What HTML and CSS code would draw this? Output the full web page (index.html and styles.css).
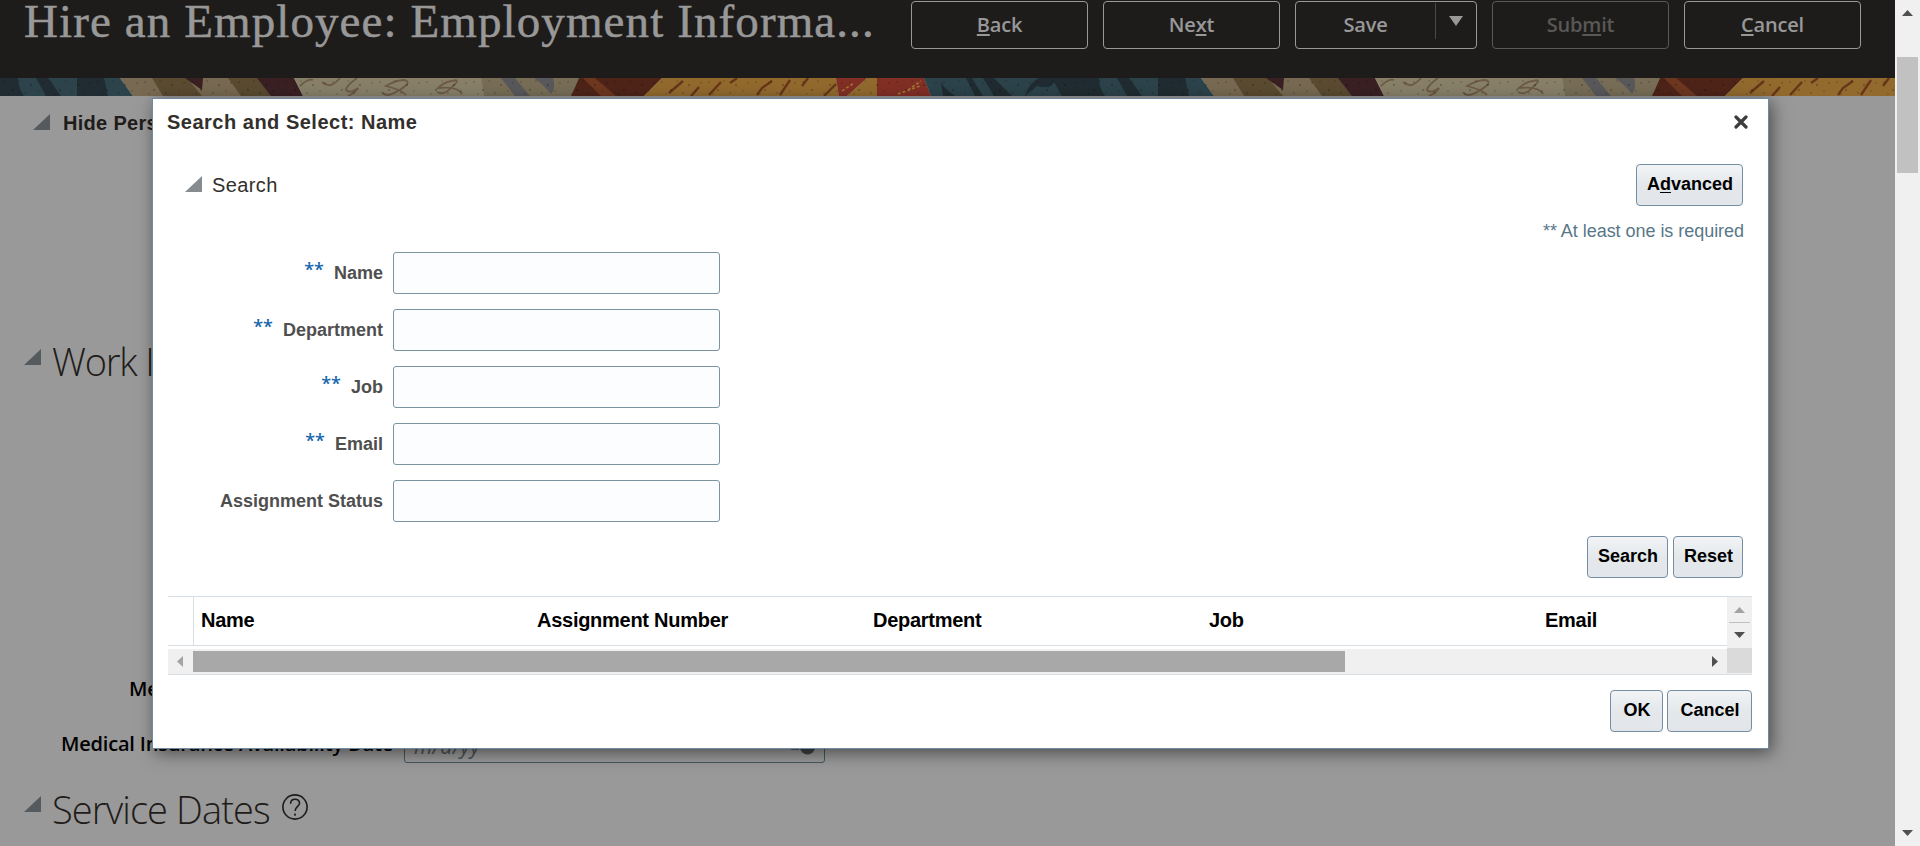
FILE: index.html
```html
<!DOCTYPE html>
<html lang="en">
<head>
<meta charset="utf-8">
<title>Hire an Employee</title>
<link rel="stylesheet" href="styles.css">
</head>
<body>
<div class="page">
  <div class="main">
    <header class="topbar">
      <h1 class="title">Hire an Employee: Employment Informa...</h1>
      <div class="actions">
        <button class="act"><span><u>B</u>ack</span></button>
        <button class="act"><span>Ne<u>x</u>t</span></button>
        <button class="act split"><span class="split-label">Save</span><span class="split-arrow"><svg width="14" height="10"><path d="M0 0H14L7 10Z" fill="#989898"/></svg></span></button>
        <button class="act disabled"><span>Sub<u>m</u>it</span></button>
        <button class="act"><span><u>C</u>ancel</span></button>
      </div>
    </header>
    <svg class="strip" width="1895" height="18" viewBox="0 0 1895 18">
      <defs>
        <pattern id="specks" width="47" height="18" patternUnits="userSpaceOnUse">
          <g fill="#000" fill-opacity=".3">
            <circle cx="4" cy="4" r=".8"/><circle cx="13" cy="12" r=".9"/><circle cx="19" cy="3" r=".7"/><circle cx="25" cy="15" r=".8"/><circle cx="31" cy="7" r=".9"/><circle cx="38" cy="13" r=".7"/><circle cx="43" cy="5" r=".8"/><circle cx="8" cy="16" r=".7"/>
          </g>
        </pattern>
        <g id="tile">
          <path fill="#2c434b" d="M-157 0H120L133 18H-150Z"/>
          <path fill="#202c31" d="M-140 4L-136 10L-126 18H-138ZM-115 0H-109L-98 18H-106ZM-98 0H-87L-69 18H-87ZM-56 18Q-52 5 -42 0H18Q18 10 24 18H-19L-27 4Q-30 12 -44 8ZM36 0H48L61 18H46ZM77 0H104L108 18H77Z"/>
          <path fill="#786a52" d="M120 0H257L271 18H133Z"/>
          <path fill="#5a4b31" d="M152 0H187L202 18H163ZM228 0H258L272 18H241Z"/>
          <path fill="#3a2023" d="M185 0H203L202 12ZM257 0H294L303 18H271Z"/>
          <path fill="#888069" d="M294 0H481L484 18H303Z"/>
          <g fill="none" stroke="#6d5b44" stroke-width="1.800">
            <path d="M300 8Q308 0 313 2M322 4Q330 12 340 0M357 0Q346 8 346 12Q350 16 358 10Q356 14 348 18M382 14Q386 20 396 14Q414 4 404 2Q396 2 386 8Q402 12 406 17M437 14Q444 18 452 9Q462 0 452 3Q444 4 438 10Q458 8 462 16"/>
          </g>
          <path fill="#786e57" d="M481 0H579L571 18H484Z"/>
          <path fill="#59585b" d="M501 0H515L530 18H515ZM534 0H553Q556 10 551 16Q545 8 534 0Z"/>
          <path fill="#4f2418" d="M579 0H662L644 18H571Z"/>
          <path fill="#6e3720" d="M583 0H595L616 18H601Z"/>
          <path fill="#926a2e" d="M662 0H836L839 18H644Z"/>
          <path fill="none" stroke="#683519" stroke-width="2.4" d="M669 15L683 3M691 18L699 9M709 17L721 4M737 0L730 5M757 17L762 10L772 3M780 17L790 2M808 0L802 8M824 18L836 6"/>
          <path fill="#822f25" d="M836 0H867L847 18H839ZM877 0H924L931 18H877Z"/>
          <path fill="#926a2e" d="M867 0H877V18H847Z"/>
          <path fill="none" stroke="#a07a36" stroke-width="1.5" stroke-dasharray="3 2" d="M842 13L854 5M898 16L920 8M908 12L921 3"/>
        </g>
      </defs>
      <use href="#tile"/><use href="#tile" x="1081"/>
      <rect width="1895" height="18" fill="url(#specks)"/>
    </svg>
    <div class="content">
      <div class="row personal"><i class="tri"></i><b>Hide Pers</b></div>
      <div class="row work"><i class="tri"></i><h2>Work I</h2></div>
      <div class="med-grid">
        <label>Me</label><span></span>
        <label>Medical Insurance Availability Date</label>
        <div class="date"><span>m/d/yy</span><svg width="26" height="22"><path d="M10 1H2V14H9M2 10H9" fill="none" stroke="#3e4a50" stroke-width="1.5"/><circle cx="17.500" cy="12" r="7.500" fill="#3e4245"/></svg></div>
      </div>
      <div class="row service"><i class="tri"></i><h2>Service Dates</h2><svg width="26" height="26" viewBox="0 0 26 26" fill="none" stroke="#1d1d1d" stroke-width="1.600"><circle cx="13" cy="13" r="12.100"/><path d="M8.600 9.700C8.600 3.800 17.500 3.900 17.500 9.200C17.500 12.300 13.100 12.600 13.100 17"/><path d="M13 19.500V21.700"/></svg></div>
    </div>
  </div>
  <div class="vscroll">
    <svg width="11" height="6"><path d="M0 6H11L5.500 0Z" fill="#505050"/></svg>
    <div class="vthumb"></div>
    <svg width="11" height="6"><path d="M0 0H11L5.500 6Z" fill="#505050"/></svg>
  </div>
</div>

<section class="dialog">
  <div class="dlg-head"><b>Search and Select: Name</b><svg width="14" height="14"><path d="M2 2L12 12M12 2L2 12" stroke="#3d3d3d" stroke-width="3.200" stroke-linecap="round"/></svg></div>
  <div class="dlg-search"><i class="tri"></i><span class="search-title">Search</span><button class="btn adv">A<u>d</u>vanced</button></div>
  <div class="required">** At least one is required</div>
  <div class="form">
    <label><em>**</em>Name</label><div class="input"></div>
    <label><em>**</em>Department</label><div class="input"></div>
    <label><em>**</em>Job</label><div class="input"></div>
    <label><em>**</em>Email</label><div class="input"></div>
    <label>Assignment Status</label><div class="input"></div>
  </div>
  <div class="form-btns"><button class="btn b-search">Search</button><button class="btn b-reset">Reset</button></div>
  <div class="table">
    <div class="thead">
      <div class="cols"><span class="sel"></span><b>Name</b><b>Assignment Number</b><b>Department</b><b>Job</b><b>Email</b></div>
      <div class="tv"><svg width="25" height="51"><path d="M7 16H18L12.500 10Z" fill="#a3a3a3"/><path d="M2 25.500H23" stroke="#c1c1c1"/><path d="M7 35H18L12.500 41Z" fill="#505050"/></svg></div>
    </div>
    <div class="hscroll">
      <svg width="25" height="24"><path d="M15 7V18L9 12.500Z" fill="#a3a3a3"/></svg>
      <div class="hthumb"></div>
      <svg class="hright" width="25" height="24"><path d="M10 7V18L16 12.500Z" fill="#505050"/></svg>
      <div class="corner"></div>
    </div>
  </div>
  <div class="dlg-foot"><button class="btn b-ok">OK</button><button class="btn b-cancel">Cancel</button></div>
</section>
</body>
</html>
```
FILE: styles.css
```css
* { box-sizing: border-box; }
body { margin: 0; width: 1920px; height: 846px; overflow: hidden; position: relative; font-family: "Liberation Sans", Arial, sans-serif; }
h1, h2 { margin: 0; font-weight: 400; }
button { margin: 0; padding: 0; }
svg { display: block; flex: none; }
.page { display: flex; height: 846px; }
.main { width: 1895px; background: #999; overflow: hidden; }
.topbar { height: 78px; background: #1e1c1a; display: flex; justify-content: space-between; padding: 1px 34px 0 24px; }
.title { font-family: "Liberation Serif", serif; font-size: 47px; line-height: 54px; margin-top: -7px; color: #989898; white-space: nowrap; letter-spacing: 1.1px; -webkit-text-stroke: .5px #989898; }
.actions { display: flex; gap: 15px; }
.act { width: 177px; height: 48px; border: 1px solid #989898; border-radius: 4px; background: none; color: #989898; font: 600 20px/46px "Open Sans", sans-serif; letter-spacing: -.2px; display: flex; justify-content: center; }
.act u { text-decoration-thickness: 2px; text-underline-offset: 2px; }
.act.disabled { color: #595856; border-color: #595856; }
.act.split { width: 182px; }
.split-label { width: 139px; }
.split-arrow { width: 41px; height: 36px; margin-top: 1px; padding: 13px 0 0 13px; border-left: 1px solid #484a50; }
.strip { height: 18px; }
.content { height: 750px; }
.row { display: flex; align-items: flex-start; color: #1f1c1a; }
.tri { display: block; flex: none; width: 17px; height: 16px; background: #555a5e; clip-path: polygon(100% 0, 100% 100%, 0 100%); }
.personal { padding: 18px 0 0 33px; height: 236px; font-size: 20px; line-height: 22px; }
.personal b { margin: -2px 0 0 13px; letter-spacing: .3px; }
.row h2 { font: 300 38px/46px "Open Sans", sans-serif; letter-spacing: -.9px; margin-left: 11px; white-space: pre; }
.work { padding: 17px 0 0 24px; height: 343px; }
.work h2 { margin-top: -11px; letter-spacing: -1.2px; }
.med-grid { display: grid; grid-template-columns: 393px 421px; grid-template-rows: 45px 43px; column-gap: 11px; height: 88px; }
.med-grid label { text-align: right; white-space: nowrap; font: 600 20px/28px "Open Sans", sans-serif; letter-spacing: -.17px; color: #000; }
.med-grid label:first-child { text-align: left; padding-left: 129px; }
.med-grid label:nth-child(3) { padding-top: 10px; }
.date { border: 1px solid #46565f; border-radius: 3px; display: flex; justify-content: space-between; padding: 14px 8px 0 9px; font: italic 21px/28px "Open Sans", sans-serif; letter-spacing: .3px; color: #4a5358; }
.date span { margin-top: -3px; }
.service { padding: 33px 0 0 24px; }
.service h2 { margin-top: -10px; }
.service svg { margin: -2px 0 0 12px; }
.vscroll { width: 25px; background: #f0f0f0; padding: 10px 2px; display: flex; flex-direction: column; align-items: center; }
.vthumb { width: 21px; height: 116px; margin: 41px 0 657px; background: #c1c1c1; }

.dialog { position: absolute; left: 152px; top: 98px; width: 1617px; height: 651px; background: #fff; border: 1px solid #6f8aa0; box-shadow: 3px 4px 16px rgba(0,0,0,.5); padding: 0 16px 0 15px; }
.dlg-head { display: flex; justify-content: space-between; padding: 12px 4px 0 0; height: 65px; font-size: 20px; line-height: 22px; letter-spacing: .5px; color: #332f2c; margin-left: -1px; }
.dlg-head svg { margin-top: 4px; }
.dlg-search { display: flex; height: 43px; padding: 0 9px 0 17px; }
.dlg-search .tri { background: #868b90; margin-top: 12px; }
.search-title { font-size: 20px; line-height: 22px; letter-spacing: .4px; color: #332f2c; margin: 10px auto 0 10px; }
.btn { height: 42px; border: 1px solid #748ea3; border-radius: 4px; background: linear-gradient(#f2f4f6, #e4e8eb 50%, #e2e6ea); font: bold 18px/38px "Liberation Sans", sans-serif; color: #000; text-align: center; padding: 0 0 2px 1px; }
.btn u { text-underline-offset: 2px; }
.adv { width: 107px; }
.required { height: 45px; padding: 13px 8px 0 0; text-align: right; font-size: 18px; line-height: 22px; letter-spacing: -.04px; color: #587788; }
.form { display: grid; grid-template-columns: 215px 327px; grid-auto-rows: 42px; row-gap: 15px; column-gap: 10px; height: 284px; }
.form label { text-align: right; font-weight: bold; font-size: 18px; line-height: 42px; color: #4f4f4f; white-space: nowrap; }
.form em { display: inline-block; font: 600 18px/20px "Open Sans", sans-serif; color: #1566ad; margin-right: 10px; transform: translateY(-3px); }
.input { border: 1px solid #7c93a0; border-radius: 3px; background: #fbfdfe; }
.form-btns { display: flex; justify-content: flex-end; gap: 5px; padding-right: 9px; height: 60px; }
.b-search { width: 81px; }
.b-reset { width: 70px; }
.table { width: 1584px; border-top: 1px solid #d6dfe6; border-bottom: 1px solid #d6dfe6; height: 79px; }
.thead { display: flex; height: 51px; }
.cols { display: grid; grid-template-columns: 26px repeat(5, 336px); width: 1559px; overflow: hidden; height: 49px; border-bottom: 1px solid #d6dfe6; font-size: 20px; line-height: 46px; letter-spacing: -.27px; }
.sel { border-right: 1px solid #d6dfe6; }
.cols b { padding-left: 7px; }
.tv { width: 25px; background: #f0f0f0; }
.hscroll { display: flex; height: 25px; margin-top: 1px; background: #f0f0f0; }
.hthumb { width: 1152px; height: 21px; margin-top: 2px; background: #a8a8a8; }
.hright { margin-left: auto; }
.corner { width: 25px; height: 25px; margin-top: -1px; background: #dadada; }
.dlg-foot { display: flex; justify-content: flex-end; gap: 4px; padding-top: 15px; }
.b-ok { width: 53px; }
.b-cancel { width: 85px; }
```
